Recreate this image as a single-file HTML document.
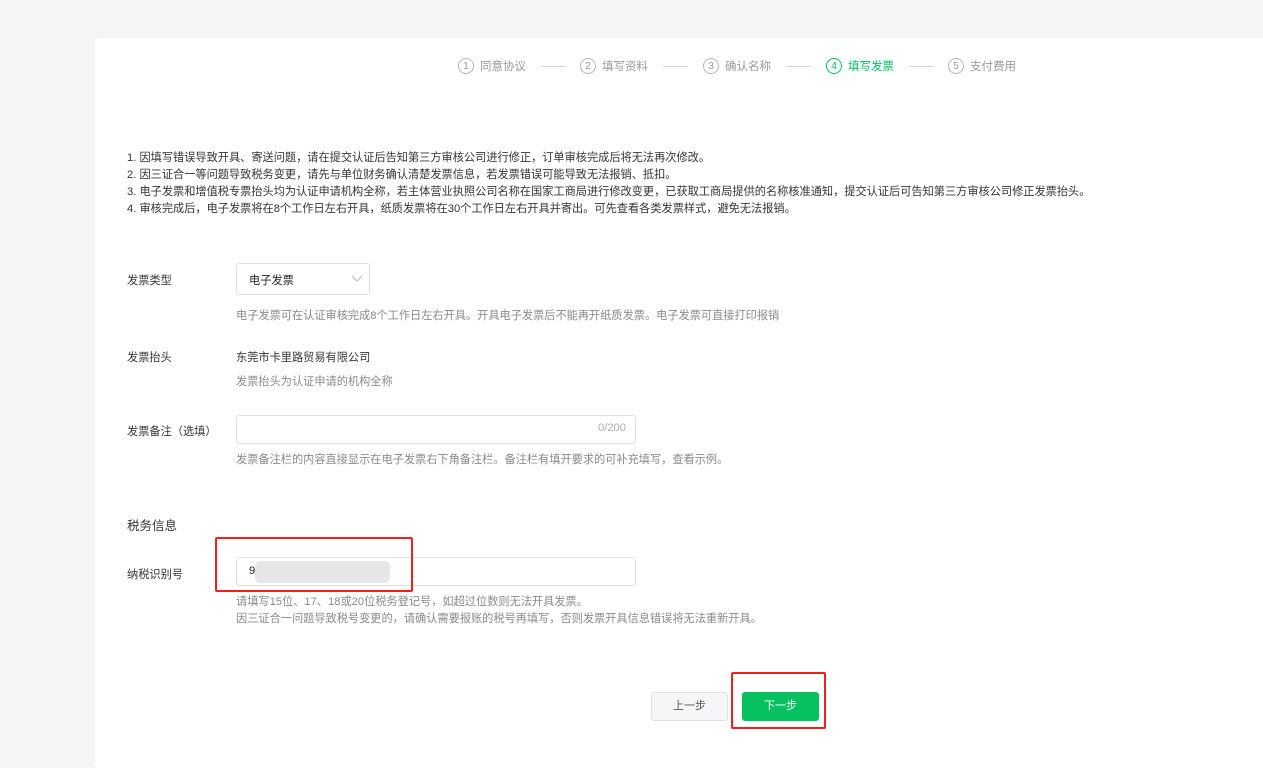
<!DOCTYPE html>
<html><head><meta charset="utf-8"><style>
*{margin:0;padding:0;box-sizing:border-box}
body{width:1263px;height:755px;background:#f4f5f7;font-family:"Liberation Sans","Noto Sans CJK SC",sans-serif;position:relative;overflow:hidden;color:#353535}
.card{position:absolute;left:95px;top:38px;width:1180px;height:730px;background:#fff;border-radius:4px}
.a{position:absolute;white-space:nowrap}
.step{position:absolute;top:58px;font-size:11.5px;color:#9a9a9a;display:flex;align-items:center}
.step i{display:inline-block;width:16px;height:16px;border:1px solid #b5b5b5;border-radius:50%;font-style:normal;font-size:10.5px;text-align:center;line-height:14px;margin-right:6px}
.line{position:absolute;top:66px;width:25px;height:1px;background:#d8d8d8}
.notes{position:absolute;left:127px;top:150px;font-size:11.2px;line-height:17px;color:#353535}
.lbl{font-size:11.2px;color:#353535}
.hint{font-size:11.2px;color:#8a8a8a}
.box{position:absolute;border:1px solid #e0e0e0;border-radius:3px;background:#fff}
.red{position:absolute;border:2px solid #f0201c;border-radius:2px}
</style></head><body>
<div class="card"></div>
<div class="step" style="left:458px"><i>1</i>同意协议</div>
<div class="line" style="left:541px"></div>
<div class="step" style="left:580px"><i>2</i>填写资料</div>
<div class="line" style="left:663px"></div>
<div class="step" style="left:703px"><i>3</i>确认名称</div>
<div class="line" style="left:786px"></div>
<div class="step" style="left:826px;color:#07c160"><i style="border-color:#07c160;color:#07c160">4</i>填写发票</div>
<div class="line" style="left:909px"></div>
<div class="step" style="left:948px"><i>5</i>支付费用</div>

<div class="notes">1. 因填写错误导致开具、寄送问题，请在提交认证后告知第三方审核公司进行修正，订单审核完成后将无法再次修改。<br>2. 因三证合一等问题导致税务变更，请先与单位财务确认清楚发票信息，若发票错误可能导致无法报销、抵扣。<br>3. 电子发票和增值税专票抬头均为认证申请机构全称，若主体营业执照公司名称在国家工商局进行修改变更，已获取工商局提供的名称核准通知，提交认证后可告知第三方审核公司修正发票抬头。<br>4. 审核完成后，电子发票将在8个工作日左右开具，纸质发票将在30个工作日左右开具并寄出。可先查看各类发票样式，避免无法报销。</div>

<div class="a lbl" style="left:127px;top:272px">发票类型</div>
<div class="box" style="left:236px;top:263px;width:134px;height:32px"></div>
<div class="a lbl" style="left:249px;top:272px;color:#222">电子发票</div>
<svg class="a" style="left:351px;top:274px" width="12" height="8"><path d="M1 2l5 5 5-5" fill="none" stroke="#bbb" stroke-width="1"/></svg>
<div class="a hint" style="left:236px;top:307px">电子发票可在认证审核完成8个工作日左右开具。开具电子发票后不能再开纸质发票。电子发票可直接打印报销</div>

<div class="a lbl" style="left:127px;top:349px">发票抬头</div>
<div class="a lbl" style="left:236px;top:349px">东莞市卡里路贸易有限公司</div>
<div class="a hint" style="left:236px;top:373px">发票抬头为认证申请的机构全称</div>

<div class="a lbl" style="left:127px;top:423px">发票备注（选填）</div>
<div class="box" style="left:236px;top:415px;width:400px;height:29px"></div>
<div class="a hint" style="left:598px;top:422px;color:#aaa">0/200</div>
<div class="a hint" style="left:236px;top:451px">发票备注栏的内容直接显示在电子发票右下角备注栏。备注栏有填开要求的可补充填写，查看示例。</div>

<div class="a" style="left:127px;top:515px;font-size:12.5px;color:#353535">税务信息</div>
<div class="a lbl" style="left:127px;top:566px">纳税识别号</div>
<div class="box" style="left:236px;top:557px;width:400px;height:29px"></div>
<div class="a lbl" style="left:249px;top:565px;color:#222">9</div>
<div class="a" style="left:255px;top:561px;width:135px;height:22px;background:#e6e6e6;border-radius:6px"></div>
<div class="red" style="left:215px;top:537px;width:198px;height:55px"></div>
<div class="a hint" style="left:236px;top:593px">请填写15位、17、18或20位税务登记号，如超过位数则无法开具发票。</div>
<div class="a hint" style="left:236px;top:610px">因三证合一问题导致税号变更的，请确认需要报账的税号再填写，否则发票开具信息错误将无法重新开具。</div>

<div class="a" style="left:651px;top:692px;width:77px;height:29px;background:#f5f6f7;border:1px solid #e0e0e0;border-radius:3px;font-size:11px;color:#555;text-align:center;line-height:27px">上一步</div>
<div class="a" style="left:742px;top:692px;width:77px;height:29px;background:#07c160;border-radius:3px;font-size:11px;color:#fff;text-align:center;line-height:29px">下一步</div>
<div class="red" style="left:731px;top:672px;width:95px;height:57px"></div>
</body></html>
